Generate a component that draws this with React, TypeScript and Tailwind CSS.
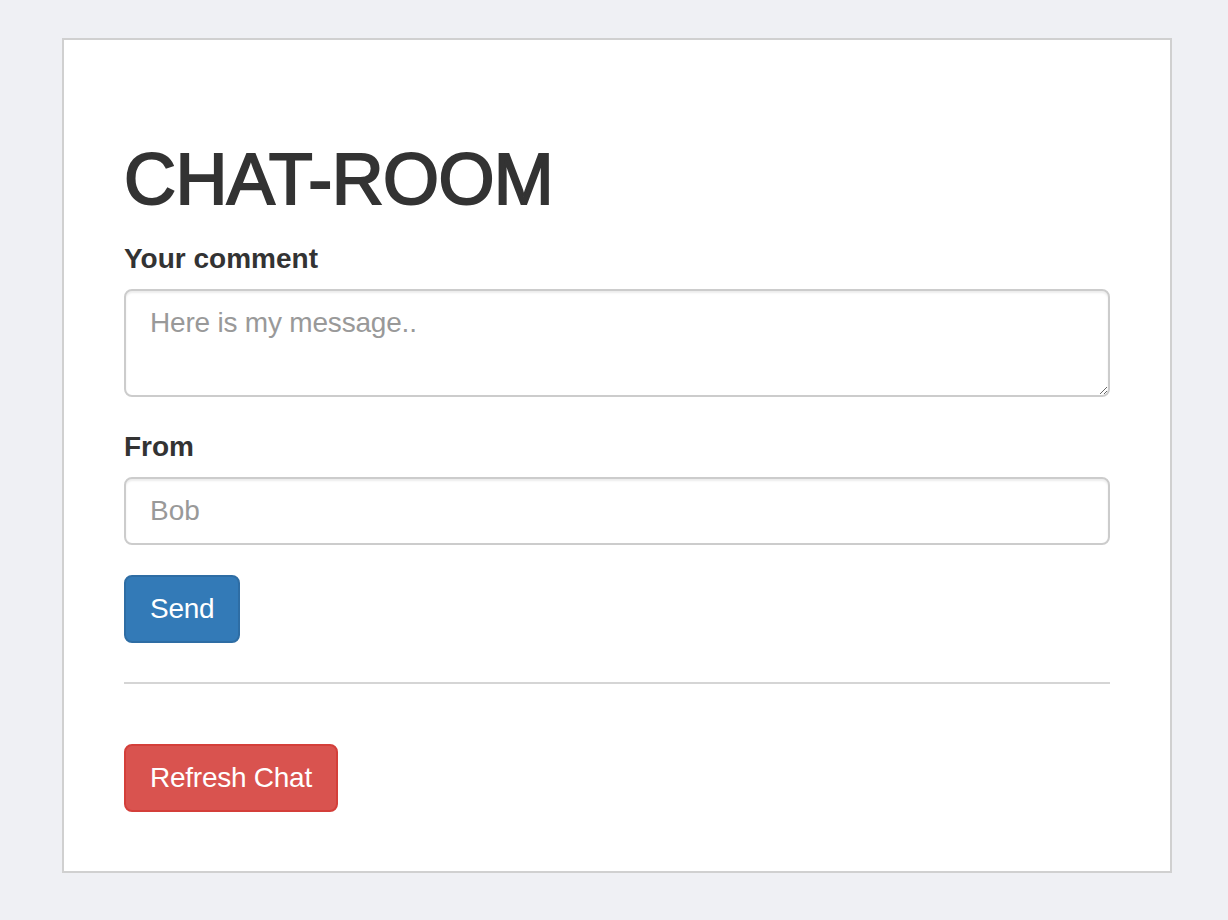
import React from 'react';

export default function App() {
  return (
    <div className="min-h-[920px] w-full bg-[#eff0f4] pt-[38px] pb-[46px] text-[#333333] font-['Liberation_Sans',Arial,sans-serif]">
      <div className="ml-[62px] w-[1110px] border-2 border-[#d0d0d0] bg-white px-[60px] pt-[60px] pb-[59px]">
        <h1 className="mt-[40px] mb-[20px] text-[72px] leading-[79.2px] font-normal tracking-[-0.6px] [-webkit-text-stroke:2px_#333333]">CHAT-ROOM</h1>

        <form onSubmit={(e) => e.preventDefault()}>
          {/* Comment */}
          <div className="mb-[30px]">
            <label className="mb-[10px] block text-[28px] leading-[40px] font-bold">Your comment</label>
            <textarea
              rows={2}
              placeholder="Here is my message.."
              className="block h-[108px] w-full rounded-[8px] border-2 border-[#cccccc] px-[24px] py-[12px] text-[28px] leading-[40px] tracking-[-0.2px] text-[#555555] placeholder:text-[#999999] shadow-[inset_0_2px_2px_rgba(0,0,0,0.075)] outline-none"
            />
          </div>

          {/* From */}
          <div className="mb-[30px]">
            <label className="mb-[10px] block text-[28px] leading-[40px] font-bold">From</label>
            <input
              type="text"
              placeholder="Bob"
              className="block h-[68px] w-full rounded-[8px] border-2 border-[#cccccc] px-[24px] py-[12px] text-[28px] leading-[40px] text-[#555555] placeholder:text-[#999999] shadow-[inset_0_2px_2px_rgba(0,0,0,0.075)] outline-none"
            />
          </div>

          <button
            type="submit"
            className="h-[68px] rounded-[8px] border-2 border-[#2e6da4] bg-[#337ab7] px-[24px] text-[28px] leading-[40px] tracking-[-0.25px] text-white"
          >
            Send
          </button>
        </form>

        <hr className="mt-[39px] mb-[60px] border-0 border-t-2 border-[#d5d5d5]" />

        <button
          type="button"
          className="h-[68px] rounded-[8px] border-2 border-[#d43f3a] bg-[#d9534f] px-[24px] text-[28px] leading-[40px] tracking-[-0.25px] text-white"
        >
          Refresh Chat
        </button>
      </div>
    </div>
  );
}
